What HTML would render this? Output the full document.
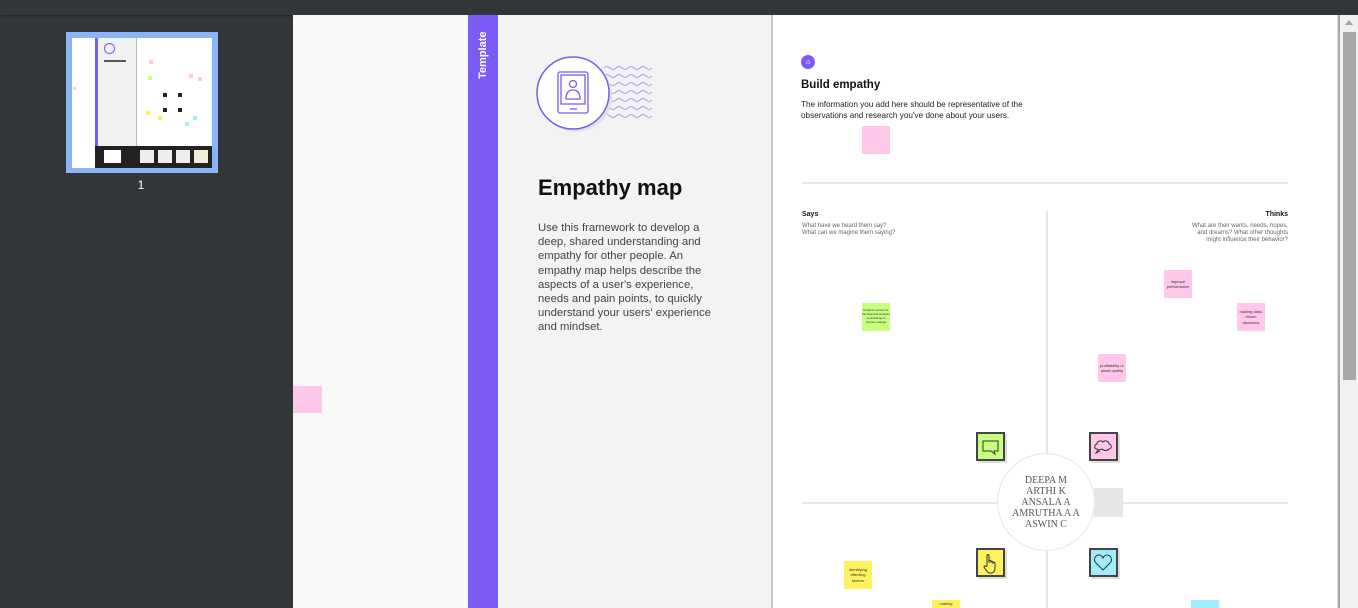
<!DOCTYPE html>
<html><head><meta charset="utf-8"><style>
*{margin:0;padding:0;box-sizing:border-box}
html,body{width:1358px;height:608px;overflow:hidden}
body{background:#323639;position:relative;font-family:"Liberation Sans",sans-serif}
.a{position:absolute}
.st{position:absolute;width:28px;height:28px;font-size:4px;text-align:center;display:flex;align-items:center;justify-content:center;color:#333;line-height:1.3}
.ic{position:absolute;width:29px;height:29px;border:2px solid #444;box-shadow:2px 2px 0 #ddd}
.h{position:absolute;background:#e6e6e6}
#wrap{position:absolute;left:0;top:0;width:1358px;height:608px;overflow:hidden}
</style></head><body><div id="wrap">
<div class="a" style="left:0;top:0;width:1358px;height:15px;background:#323639;box-shadow:0 1px 2px #222"></div>
<!-- thumbnail -->
<div class="a" style="left:66px;top:32px;width:152px;height:141px;background:#8ab4f8"></div>
<div class="a" style="left:72px;top:38px;width:140px;height:130px;background:#fff"></div>
<div class="a" style="left:95px;top:38px;width:3px;height:108px;background:#7b5af5"></div>
<div class="a" style="left:98px;top:38px;width:38px;height:108px;background:#f1f1f1"></div>
<div class="a" style="left:95px;top:146px;width:117px;height:22px;background:#222"></div>
<div class="a" style="left:104px;top:150px;width:17px;height:13px;background:#fff"></div>
<div class="a" style="left:140px;top:150px;width:14px;height:13px;background:#eee"></div>
<div class="a" style="left:158px;top:150px;width:14px;height:13px;background:#eee"></div>
<div class="a" style="left:176px;top:150px;width:14px;height:13px;background:#eee"></div>
<div class="a" style="left:194px;top:150px;width:14px;height:13px;background:#efefd8"></div>
<div class="a" style="left:104px;top:43px;width:11px;height:11px;border:1px solid #7b5af5;border-radius:50%"></div>
<div class="a" style="left:104px;top:60px;width:22px;height:2px;background:#555"></div>
<div class="a" style="left:73px;top:87px;width:3px;height:3px;background:#fcc"></div>
<div class="a" style="left:136px;top:38px;width:1px;height:108px;background:#bbb"></div>
<div class="a" style="left:149px;top:60px;width:4px;height:4px;background:#fcc"></div>
<div class="a" style="left:148px;top:76px;width:4px;height:4px;background:#c7fe80"></div>
<div class="a" style="left:189px;top:74px;width:4px;height:4px;background:#fcc"></div>
<div class="a" style="left:198px;top:77px;width:4px;height:4px;background:#fcc"></div>
<div class="a" style="left:163px;top:93px;width:4px;height:4px;background:#222"></div>
<div class="a" style="left:178px;top:93px;width:4px;height:4px;background:#222"></div>
<div class="a" style="left:163px;top:108px;width:4px;height:4px;background:#222"></div>
<div class="a" style="left:178px;top:108px;width:4px;height:4px;background:#222"></div>
<div class="a" style="left:146px;top:111px;width:4px;height:4px;background:#fff25e"></div>
<div class="a" style="left:158px;top:116px;width:4px;height:4px;background:#fff25e"></div>
<div class="a" style="left:193px;top:116px;width:4px;height:4px;background:#9fecfb"></div>
<div class="a" style="left:185px;top:122px;width:4px;height:4px;background:#9fecfb"></div>
<div class="a" style="left:134px;top:178px;width:14px;text-align:center;color:#fff;font-size:12px">1</div>
<!-- main viewer -->
<div class="a" style="left:293px;top:15px;width:1047px;height:593px;background:#f8f8f8"></div>
<div class="a" style="left:293px;top:386px;width:29px;height:27px;background:#ffc7ea"></div>
<div class="a" style="left:468px;top:15px;width:30px;height:593px;background:#7b5af5"></div>
<div class="a" style="left:464px;top:54px;width:38px;font-size:11px;font-weight:bold;color:#fff;transform:rotate(-90deg);text-align:center;line-height:12px">Template</div>
<div class="a" style="left:498px;top:15px;width:273px;height:593px;background:#f3f3f3"></div>
<div class="a" style="left:771px;top:15px;width:2px;height:593px;background:#c8c8c8"></div>
<div class="a" style="left:773px;top:15px;width:565px;height:593px;background:#fff"></div>
<div class="a" style="left:1337px;top:15px;width:3px;height:593px;background:#aaa;border-left:1px solid #ddd"></div>
<div class="a" style="left:1340px;top:15px;width:18px;height:593px;background:#f1f1f1"></div>
<div class="a" style="left:1343px;top:32px;width:13px;height:348px;background:#a8a8a8"></div>
<div class="a" style="left:1345px;top:20px;width:0;height:0;border-left:4px solid transparent;border-right:4px solid transparent;border-bottom:5px solid #a3a3a3"></div>
<!-- left panel content -->
<svg class="a" style="left:520px;top:52px" width="135" height="84" viewBox="0 0 135 84">
<g fill="none" stroke="#a9a3f2" stroke-width="1">
<path d="M84 16 q3-3 6 0 t6 0 t6 0 t6 0 t6 0 t6 0 t6 0 t6 0"/>
<path d="M84 24 q3-3 6 0 t6 0 t6 0 t6 0 t6 0 t6 0 t6 0 t6 0"/>
<path d="M84 32 q3-3 6 0 t6 0 t6 0 t6 0 t6 0 t6 0 t6 0 t6 0"/>
<path d="M84 40 q3-3 6 0 t6 0 t6 0 t6 0 t6 0 t6 0 t6 0 t6 0"/>
<path d="M84 48 q3-3 6 0 t6 0 t6 0 t6 0 t6 0 t6 0 t6 0 t6 0"/>
<path d="M84 56 q3-3 6 0 t6 0 t6 0 t6 0 t6 0 t6 0 t6 0 t6 0"/>
<path d="M84 64 q3-3 6 0 t6 0 t6 0 t6 0 t6 0 t6 0 t6 0 t6 0"/>
</g>
<circle cx="56" cy="44" r="36" fill="#e2e2e2"/>
<circle cx="53" cy="41" r="36" fill="#fff" stroke="#7b5af5" stroke-width="1.5"/>
<g fill="none" stroke="#7b5af5" stroke-width="1.3">
<rect x="38" y="20" width="30" height="41" rx="2"/><rect x="41" y="23" width="24" height="29"/>
<circle cx="53" cy="32" r="3.5"/><path d="M46 47 q0-9 7-9 q7 0 7 9 z"/><path d="M50 57 h7"/></g>
</svg>
<div class="a" style="left:538px;top:175px;font-size:22px;font-weight:bold;color:#111">Empathy map</div>
<div class="a" style="left:538px;top:221px;width:188px;font-size:11.3px;line-height:14.2px;color:#444">Use this framework to develop a deep, shared understanding and empathy for other people. An empathy map helps describe the aspects of a user's experience, needs and pain points, to quickly understand your users' experience and mindset.</div>
<!-- right panel -->
<div class="a" style="left:801px;top:55px;width:14px;height:14px;border-radius:50%;background:#7b5af5;color:#fff;font-size:8px;text-align:center;line-height:14px">☼</div>
<div class="a" style="left:801px;top:79px;font-size:11.5px;font-weight:bold;color:#111">Build empathy</div>
<div class="a" style="left:801px;top:99px;width:260px;font-size:8.2px;line-height:11px;color:#222">The information you add here should be representative of the observations and research you've done about your users.</div>
<div class="a" style="left:862px;top:126px;width:28px;height:28px;background:#ffc7ea"></div>
<div class="h" style="left:802px;top:182px;width:486px;height:2px"></div>
<div class="a" style="left:802px;top:211px;font-size:7px;font-weight:bold;color:#111">Says</div>
<div class="a" style="left:802px;top:223px;font-size:6px;line-height:7px;color:#666">What have we heard them say?<br>What can we magine them saying?</div>
<div class="a" style="left:1150px;top:211px;width:138px;text-align:right;font-size:7px;font-weight:bold;color:#111">Thinks</div>
<div class="a" style="left:1186px;top:223px;width:102px;text-align:right;font-size:6px;line-height:7px;color:#666">What are their wants, needs, hopes, and dreams? What other thoughts might influence their behavior?</div>
<div class="h" style="left:1046px;top:211px;width:2px;height:397px"></div>
<div class="h" style="left:802px;top:502px;width:486px;height:2px"></div>
<div class="st" style="left:862px;top:303px;background:#c7fe80;font-size:3px">Iterature survey for the financial analysis contributing to climate change</div>
<div class="st" style="left:1164px;top:270px;background:#ffc7ea">improve performance</div>
<div class="st" style="left:1237px;top:303px;background:#ffc7ea">making data-driven decisions</div>
<div class="st" style="left:1098px;top:354px;background:#ffc7ea">profitability or asset quality</div>
<div class="st" style="left:844px;top:561px;background:#fff25e">identifying affecting factors</div>
<div class="st" style="left:932px;top:600px;background:#fff25e;align-items:flex-start;padding-top:1px">making</div>
<div class="a" style="left:1191px;top:600px;width:28px;height:8px;background:#9fecfb"></div>
<div class="a" style="left:1094px;top:488px;width:29px;height:29px;background:#e6e6e6"></div>
<div class="a" style="left:997px;top:453px;width:98px;height:98px;border-radius:50%;background:#fff;border:1.5px solid #e6e6e6;display:flex;align-items:center;justify-content:center;text-align:center;font-family:'Liberation Serif',serif;font-size:10px;line-height:11px;color:#555">DEEPA M<br>ARTHI K<br>ANSALA A<br>AMRUTHA A A<br>ASWIN C</div>
<div class="ic" style="left:976px;top:432px;background:#c7fe80"><svg width="25" height="25"><path d="M5 7h15v10h-4l1 3-4-3H5z" fill="none" stroke="#333"/></svg></div>
<div class="ic" style="left:1089px;top:432px;background:#ffc7ea"><svg width="25" height="25"><path d="M6 15c-3 0-3-4 0-5 0-3 4-4 6-2 2-2 6-1 6 2 3 0 3 5 0 5-2 2-5 2-7 0-2 1-4 1-5 0zM7 16l-2 3 4-2" fill="none" stroke="#333"/></svg></div>
<div class="ic" style="left:976px;top:548px;background:#fff25e"><svg width="25" height="25"><path d="M9 16V6c0-2 2-2 2 0v7 -2c0-1 2-1 2 0v2-1c0-1 2-1 2 0v2-1c0-1 2-1 2 0v5c0 2-1 4-3 5h-3c-2-1-3-3-5-6 0-1 1-2 3 0" fill="none" stroke="#333"/></svg></div>
<div class="ic" style="left:1089px;top:548px;background:#9fecfb"><svg width="25" height="25"><path d="M12 20L5 13c-3-3-1-8 3-8 2 0 3 1 4 3 1-2 2-3 4-3 4 0 6 5 3 8z" fill="none" stroke="#333"/></svg></div>
</div></body></html>
